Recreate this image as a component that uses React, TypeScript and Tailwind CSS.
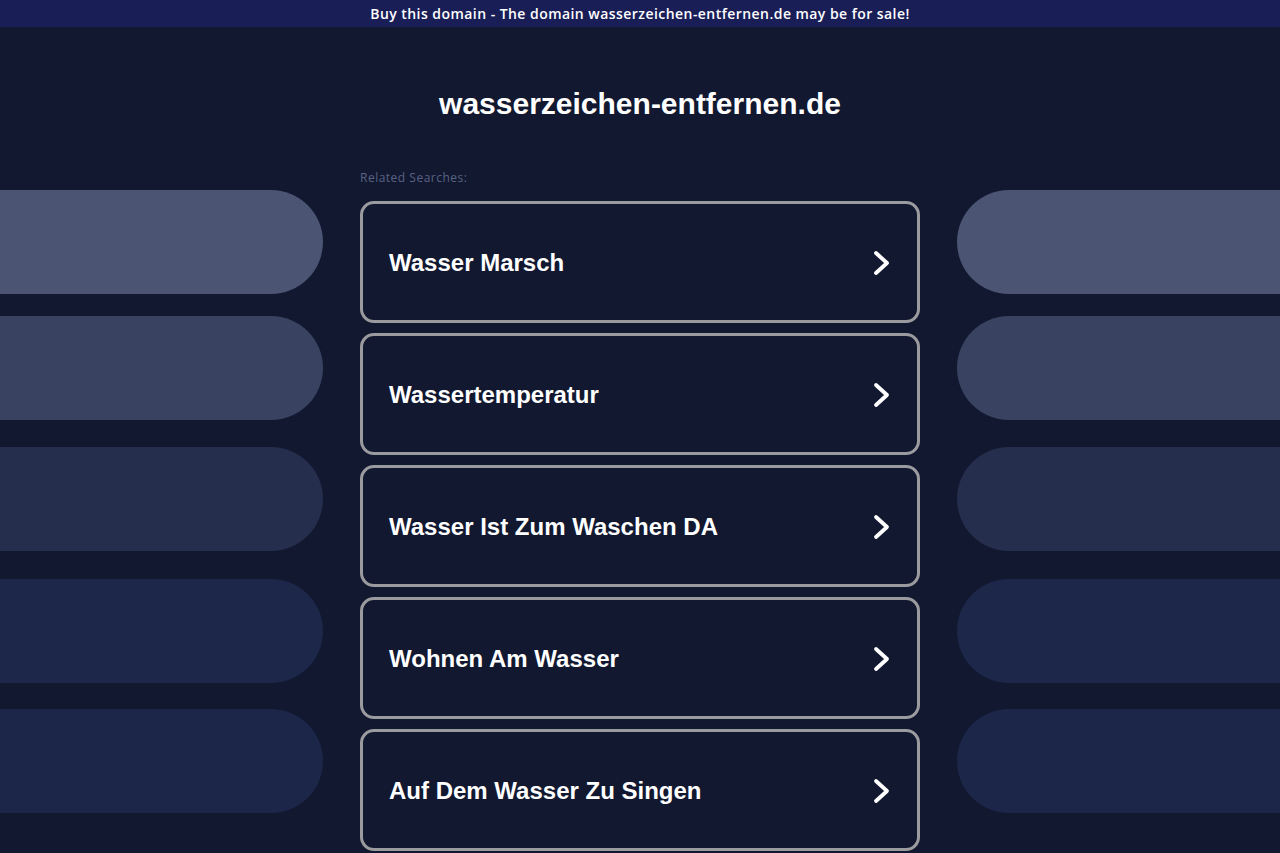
const searches = [
  "Wasser Marsch",
  "Wassertemperatur",
  "Wasser Ist Zum Waschen DA",
  "Wohnen Am Wasser",
  "Auf Dem Wasser Zu Singen",
];

const pills = [
  { color: "bg-[#4b5573]", mt: "mt-[21px]" },
  { color: "bg-[#394261]", mt: "mt-[22px]" },
  { color: "bg-[#262e4d]", mt: "mt-[27px]" },
  { color: "bg-[#1d2749]", mt: "mt-[28px]" },
  { color: "bg-[#1c2648]", mt: "mt-[26px]" },
];

function SidePills({ side }: { side: "left" | "right" }) {
  return (
    <div className="flex w-[323px] shrink-0 flex-col">
      {pills.map((p, i) => (
        <div
          key={i}
          className={`h-[104px] ${p.mt} ${p.color} ${
            side === "left" ? "rounded-r-full" : "rounded-l-full"
          }`}
        />
      ))}
    </div>
  );
}

function Chevron() {
  return (
    <svg width="18" height="26" viewBox="0 0 18 26" fill="none" className="text-white">
      <polyline
        points="3,3 14,13 3,23"
        stroke="currentColor"
        strokeWidth="3.8"
        strokeLinecap="round"
        strokeLinejoin="round"
      />
    </svg>
  );
}

export default function App() {
  return (
    <main className="min-h-[853px] overflow-hidden bg-[#111830] font-['Liberation_Sans',Arial,sans-serif]">
      {/* Sale banner */}
      <div className="flex h-[27px] items-center justify-center bg-[#191e57] font-['Open_Sans',sans-serif] text-[14px] font-semibold tracking-[0.45px] text-white">
        Buy this domain - The domain wasserzeichen-entfernen.de may be for sale!
      </div>

      {/* Domain title */}
      <h1 className="mt-[59px] text-center text-[30px] font-bold leading-[36px] text-white">
        wasserzeichen-entfernen.de
      </h1>

      <div className="mt-[47px] flex gap-[37px]">
        <SidePills side="left" />

        <div className="flex w-[560px] shrink-0 flex-col">
          <p className="mt-[1px] font-['Open_Sans',sans-serif] text-[12px] leading-[16px] tracking-[0.5px] text-[#5a6283]">
            Related Searches:
          </p>
          <div className="mt-[15px] flex flex-col gap-[10px]">
            {searches.map((s) => (
              <a
                key={s}
                href="#"
                className="flex h-[122px] items-center justify-between rounded-[14px] border-[3px] border-[#9b9b9f] pl-[26px] pr-[26px] pt-[2px]"
              >
                <span className="text-[24px] font-bold text-white">{s}</span>
                <Chevron />
              </a>
            ))}
          </div>
        </div>

        <SidePills side="right" />
      </div>
    </main>
  );
}
